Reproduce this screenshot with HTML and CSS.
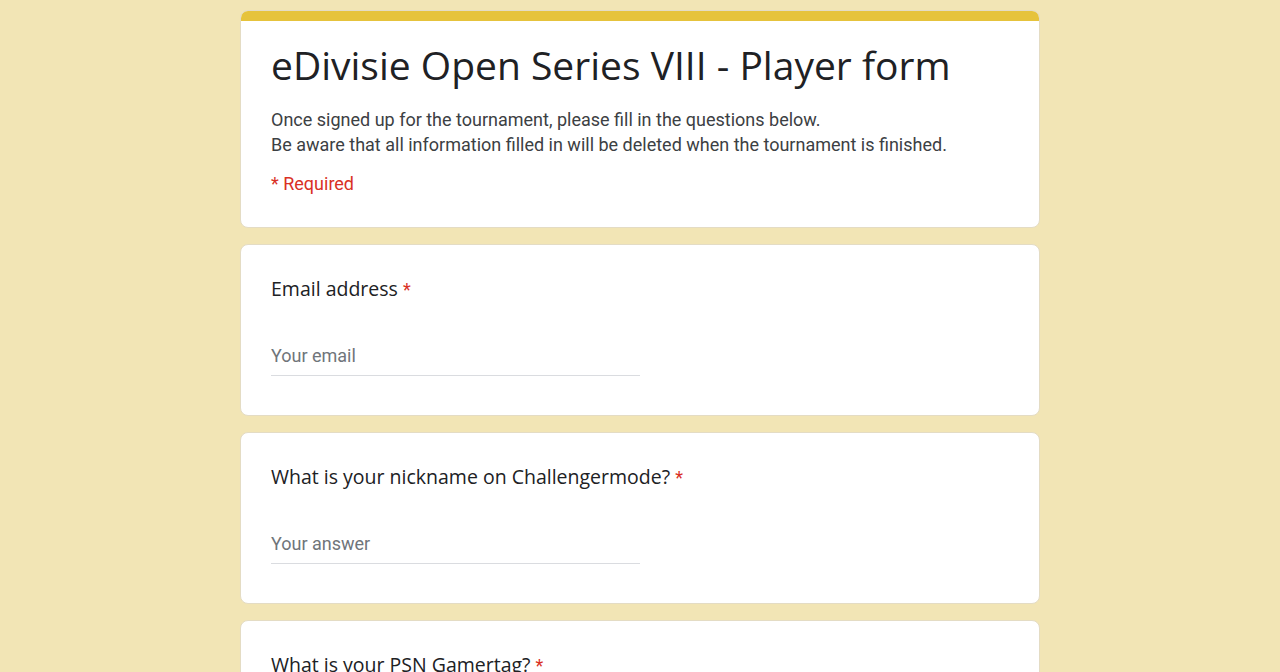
FILE: index.html
```html
<!DOCTYPE html>
<html>
<head>
<meta charset="utf-8">
<link rel="stylesheet" href="styles.css">
</head>
<body>
<main class="form">
  <section class="card header-card">
    <div class="accent"></div>
    <div class="header-body">
      <h1 class="title">eDivisie Open Series VIII - Player form</h1>
      <p class="desc">Once signed up for the tournament, please fill in the questions below.<br>Be aware that all information filled in will be deleted when the tournament is finished.</p>
      <p class="required-note">* Required</p>
    </div>
  </section>
  <section class="card question">
    <div class="q-label">Email address <span class="star">*</span></div>
    <div class="q-input">Your email</div>
  </section>
  <section class="card question">
    <div class="q-label">What is your nickname on Challengermode? <span class="star">*</span></div>
    <div class="q-input">Your answer</div>
  </section>
  <section class="card question">
    <div class="q-label">What is your PSN Gamertag? <span class="star">*</span></div>
    <div class="q-input">Your answer</div>
  </section>
</main>
</body>
</html>
```
FILE: styles.css
```css
html, body {
  margin: 0;
  padding: 0;
}
body {
  background: #f2e5b5;
  font-family: Roboto, "Liberation Sans", sans-serif;
  color: #202124;
}
.form {
  width: 800px;
  margin: 0 auto;
  padding-top: 10px;
  display: flex;
  flex-direction: column;
  gap: 16px;
}
.card {
  background: #fff;
  border: 1px solid #e4dcc4;
  border-radius: 8px;
  box-sizing: border-box;
  overflow: hidden;
}
.accent {
  height: 11px;
  background: #e6c33c;
  margin: -1px -1px 0 -1px;
}
.header-body {
  padding: 20px 30px 33px 30px;
}
.title {
  margin: 0;
  font-family: "Open Sans", sans-serif;
  font-weight: 400;
  font-size: 39px;
  line-height: 48px;
  color: #202124;
}
.desc {
  margin: 18px 0 0 0;
  font-size: 18px;
  line-height: 25px;
  color: #3c4043;
}
.required-note {
  margin: 17px 0 0 0;
  font-size: 18px;
  line-height: 20px;
  color: #d93025;
}
.question {
  padding: 30px 30px 39px 30px;
}
.q-label {
  font-family: "Open Sans", sans-serif;
  font-size: 19.5px;
  line-height: 28px;
  color: #202124;
}
.star {
  font-family: Roboto, sans-serif;
  font-size: 18px;
  color: #d93025;
}
.q-input {
  margin-top: 40px;
  width: 369px;
  padding-bottom: 7px;
  border-bottom: 1px solid #dadce0;
  font-size: 18px;
  line-height: 24px;
  color: #70757a;
}
```
